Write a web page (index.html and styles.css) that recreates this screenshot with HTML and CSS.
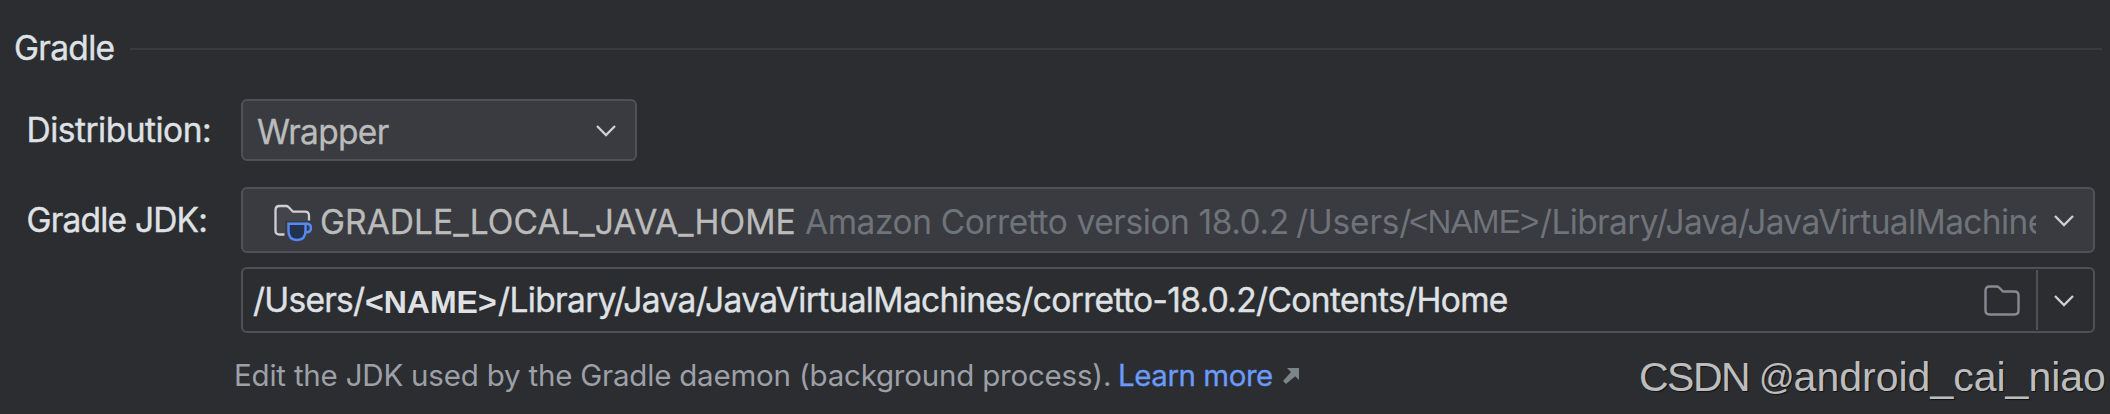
FILE: index.html
```html
<!DOCTYPE html>
<html lang="en">
<head>
<meta charset="utf-8">
<title>Gradle</title>
<link rel="stylesheet" href="styles.css">
</head>
<body>
<main class="panel">
  <header class="section"><h1 class="title">Gradle</h1><span class="rule"></span></header>
  <div class="row row-dist">
    <span class="label l-dist">Distribution:</span>
    <div class="combo combo-small">
      <span class="value wrapper">Wrapper</span>
      <svg class="chevron chev-small" viewBox="0 0 22 14"><path d="M2 2l9 9 9-9"/></svg>
    </div>
  </div>
  <div class="row row-jdk">
    <span class="label l-jdk">Gradle JDK:</span>
    <div class="combo combo-wide">
      <svg class="jdk-icon" viewBox="0 0 40 40">
        <path d="M11 32H7.500Q3.500 32 3.500 28V8Q3.500 4 7.500 4H14Q15.500 4 16.500 5L21.500 10H33Q37 10 37 14V18" fill="#43454a" stroke="none"/>
        <path d="M12.500 32.500H7.500Q3.500 32.500 3.500 28.500V8Q3.500 4 7.500 4H14Q15.500 4 16.500 5L21 9.700H33Q37 9.700 37 13.700V18.500" fill="none" stroke="#ced0d6" stroke-width="2.300"/>
        <path d="M13 19h27v20H13z" fill="#3a3b40" stroke="none"/>
        <path d="M16.500 21.800H33.500V29Q33.500 38 25 38T16.500 29Z" fill="#25324d" stroke="#548af7" stroke-width="2.400"/>
        <path d="M33.500 21.800H35.500Q39 22.300 39 26T35.500 30.200H33.500" fill="none" stroke="#548af7" stroke-width="2.400"/>
      </svg>
      <span class="clip"><span class="value s1">GRADLE_LOCAL_JAVA_HOME</span><span class="dim s2">Amazon Corretto version 18.0.2</span><span class="dim s3">/Users/</span><span class="dim name n1">&lt;NAME&gt;</span><span class="dim s4">/Library/Java/JavaVirtualMachines</span></span>
      <svg class="chevron" viewBox="0 0 22 14"><path d="M2 2l9 9 9-9"/></svg>
    </div>
  </div>
  <div class="field">
    <span class="path"><span class="p1">/Users/</span><span class="name n2">&lt;NAME&gt;</span><span class="p2">/Library/Java/JavaVirtualMachines/corretto-18.0.2/Contents/Home</span></span>
    <svg class="folder" viewBox="0 0 36 31"><path d="M5.500 1.500H12.500Q14 1.500 15 2.500L19 6.500H30.500Q34.500 6.500 34.500 10.500V25.500Q34.500 29.500 30.500 29.500H5.500Q1.500 29.500 1.500 25.500V5.500Q1.500 1.500 5.500 1.500Z"/></svg>
    <span class="drop"><svg class="chevron" viewBox="0 0 22 14"><path d="M2 2l9 9 9-9"/></svg></span>
  </div>
  <footer class="foot">
    <span class="help">Edit the JDK used by the Gradle daemon (background process).</span>
    <a class="link">Learn more</a>
    <svg class="ext" viewBox="0 0 16 16"><path d="M4 0H16V12L12.200 8.200 3 16 0 13 8 4Z"/></svg>
    <span class="mark"><span class="mark-site">CSDN </span><span class="mark-at">@</span>android_cai_niao</span>
  </footer>
</main>
</body>
</html>
```
FILE: styles.css
```css
* { box-sizing: border-box; }
body { margin: 0; background: #2b2d30; font-family: Inter, "Liberation Sans", sans-serif; font-size: 33.5px; color: #dfe1e5; }
.panel { width: 2110px; height: 414px; overflow: hidden; padding-top: 29px; white-space: nowrap; }
.section { display: flex; align-items: center; height: 40px; padding-left: 14px; }
.title { margin: 0; width: 116px; padding-bottom: 3px; font-size: 33.5px; font-weight: 400; line-height: 38px; letter-spacing: -.7px; -webkit-text-stroke: .4px; }
.rule { width: 1972px; height: 2px; background: #393b40; }
.row { display: flex; align-items: center; }
.row-dist { margin-top: 30px; height: 62px; }
.row-jdk { margin-top: 26px; height: 66px; }
.label { width: 241px; padding-left: 26.5px; line-height: 40px; -webkit-text-stroke: .4px; }
.l-dist { letter-spacing: -.5px; }
.l-jdk { letter-spacing: -.8px; }
.combo { display: flex; align-items: center; height: 100%; background: #393b40; border: 2px solid #4e5157; border-radius: 6px; }
.combo-small { width: 396px; justify-content: space-between; padding: 0 18px 0 14px; }
.combo-wide { width: 1854px; padding: 0 18px 0 29px; }
.value { color: #bbbbbb; -webkit-text-stroke: .3px; }
.wrapper { letter-spacing: -.7px; }
.wrapper, .clip { padding-top: 3px; }
.chevron { flex: none; width: 22px; height: 14px; margin-top: 1px; fill: none; stroke: #ced0d6; stroke-width: 2.3; }
.jdk-icon { flex: none; width: 40px; height: 40px; margin-top: 3px; }
.clip { display: flex; width: 1716px; margin-left: 8px; margin-right: 17px; overflow: hidden; line-height: 44px; }
.dim { color: #6f737a; }
.s1, .s2, .s3, .s4, .name, .p1, .p2 { flex: none; }
.s1 { width: 485px; letter-spacing: .05px; }
.s2 { width: 491px; letter-spacing: -.42px; }
.s3 { width: 113px; letter-spacing: -.2px; }
.s4 { letter-spacing: -.63px; }
.name { font-family: "Liberation Sans", Arial, sans-serif; }
.n1 { width: 131px; font-size: 33px; letter-spacing: -.7px; }
.field { display: flex; align-items: center; margin: 14px 0 0 241px; width: 1854px; height: 66px; border: 2px solid #4e5157; border-radius: 6px; }
.path { display: flex; flex: none; width: 1741px; padding: 2px 0 0 10px; line-height: 40px; -webkit-text-stroke: .4px; }
.p1 { width: 112px; letter-spacing: -.75px; }
.n2 { width: 133px; font-weight: 700; font-size: 32px; padding-top: 2px; -webkit-text-stroke: 0; }
.p2 { letter-spacing: -.64px; }
.folder { flex: none; width: 36px; height: 31px; fill: none; stroke: #868a91; stroke-width: 2.4; }
.drop { display: flex; flex: none; align-items: center; justify-content: center; margin-left: 16px; width: 57px; height: 60px; padding-right: 3px; border-left: 2px solid #4e5157; }
.foot { display: flex; height: 81px; padding: 18px 0 0 234px; font-size: 29.5px; line-height: 48px; }
.help { flex: none; width: 884px; color: #9da0a8; letter-spacing: -.2px; }
.link { flex: none; width: 165px; color: #6b9bfa; letter-spacing: -.45px; -webkit-text-stroke: .3px; }
.ext { flex: none; width: 16px; height: 16px; margin-top: 17px; fill: #7b8589; }
.mark { flex: none; margin-left: 340px; padding-top: 2px; font-family: "Liberation Sans", Arial, sans-serif; font-size: 41px; color: #bdbdbd; text-shadow: 1px 1px 1px rgba(0,0,0,.6); }
.mark-site { letter-spacing: -1.5px; }
.mark-at { font-size: 35px; letter-spacing: -1px; position: relative; top: -2px; }
```
